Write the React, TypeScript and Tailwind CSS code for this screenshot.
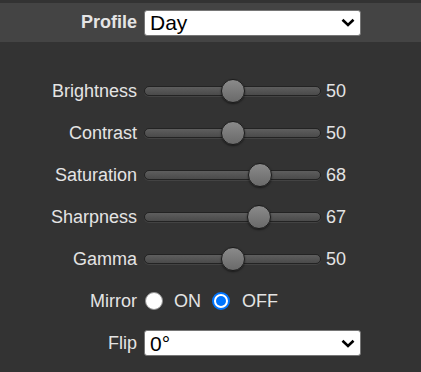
const sliders = [
  { label: "Brightness", value: 50 },
  { label: "Contrast", value: 50 },
  { label: "Saturation", value: 68 },
  { label: "Sharpness", value: 67 },
  { label: "Gamma", value: 50 },
];

function Chevron() {
  return (
    <svg width="14" height="9" viewBox="0 0 14 9" className="shrink-0">
      <path d="M1.5 1.8 L7 7 L12.5 1.8" fill="none" stroke="#000" strokeWidth="2.6" />
    </svg>
  );
}

function Select({ value }: { value: string }) {
  return (
    <div className="flex h-[26px] w-[217px] items-center justify-between rounded-[3px] border border-[#767676] bg-white pl-[5px] pr-[5px]">
      <span className="text-[21px] leading-none text-black">{value}</span>
      <Chevron />
    </div>
  );
}

function Slider({ value }: { value: number }) {
  // thumb centre runs from 11px to (177 - 11)px
  const left = (value / 100) * 155;
  return (
    <div className="relative h-[24px] w-[177px]">
      <div className="absolute left-0 right-0 top-[7px] h-[10px] rounded-full border border-[#232323] bg-gradient-to-b from-[#5e5e5e] to-[#4a4a4a] shadow-[0_1px_0_rgba(255,255,255,0.08)]" />
      <div
        className="absolute top-0 h-[24px] w-[24px] rounded-full border border-[#1c1c1c] bg-gradient-to-b from-[#8a8a8a] to-[#6a6a6a] shadow-[0_1px_2px_rgba(0,0,0,0.5)]"
        style={{ left: left - 1 }}
      />
    </div>
  );
}

function Radio({ checked }: { checked: boolean }) {
  return checked ? (
    <span className="flex h-[18px] w-[18px] shrink-0 items-center justify-center rounded-full border-2 border-[#0075ff] bg-white">
      <span className="h-[10px] w-[10px] rounded-full bg-[#0075ff]" />
    </span>
  ) : (
    <span className="block h-[18px] w-[18px] shrink-0 rounded-full border border-[#8f8f8f] bg-white" />
  );
}

export default function App() {
  return (
    <div
      className="h-[372px] w-[421px] bg-[#333333] pt-[3px] text-[18px] text-[#e4e4e4]"
      style={{ fontFamily: '"Liberation Sans", Arial, sans-serif' }}
    >
      {/* Profile bar */}
      <div className="flex h-[39px] items-center bg-[#444444]">
        <div className="w-[137px] text-right font-bold">Profile</div>
        <div className="ml-[7px]">
          <Select value="Day" />
        </div>
      </div>

      <div className="mt-[28px] grid grid-cols-[137px_1fr] gap-x-[7px]">
        {sliders.map((s) => (
          <div key={s.label} className="contents">
            <div className="flex h-[42px] items-center justify-end">{s.label}</div>
            <div className="flex h-[42px] items-center gap-[5px]">
              <Slider value={s.value} />
              <span>{s.value}</span>
            </div>
          </div>
        ))}

        <div className="flex h-[42px] items-center justify-end">Mirror</div>
        <div className="flex h-[42px] items-center">
          <span className="ml-[1px]">
            <Radio checked={false} />
          </span>
          <span className="ml-[11px]">ON</span>
          <span className="ml-[11px]">
            <Radio checked={true} />
          </span>
          <span className="ml-[12px]">OFF</span>
        </div>

        <div className="flex h-[42px] items-center justify-end">Flip</div>
        <div className="flex h-[42px] items-center">
          <Select value="0°" />
        </div>
      </div>
    </div>
  );
}
